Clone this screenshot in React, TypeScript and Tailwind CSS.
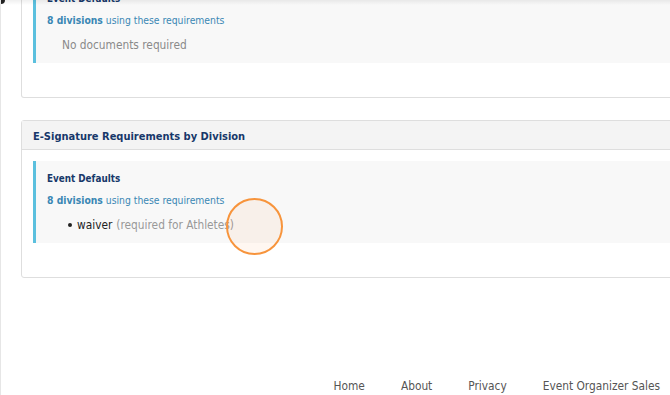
import React from 'react';

type Group = {
  title: string;
  count: number;
  items: { name: string; note: string }[];
  empty?: string;
};

function RequirementBlock({ group }: { group: Group }) {
  return (
    <div className="border-l-[3px] border-[#5bc0de] bg-[#f8f8f8] pl-[11px] pt-[11px] pb-[11px]">
      <div className="text-[9.8px] font-bold leading-[14px] text-[#17386a]">{group.title}</div>
      <div className="mt-[7px] text-[10.3px] leading-[14px] text-[#3a87b4]">
        <span className="font-bold">{group.count} divisions</span> using these requirements
      </div>
      {group.empty && (
        <div className="mt-[11px] pl-[15px] text-[11.8px] leading-[14px] text-[#8a8a8a]">{group.empty}</div>
      )}
      {group.items.length > 0 && (
        <ul className="mt-[11px] pl-[21px]">
          {group.items.map((it) => (
            <li key={it.name} className="flex items-center text-[11.8px] leading-[14px]">
              <span className="mr-[5px] inline-block h-[4px] w-[4px] rounded-full bg-[#222]" />
              <span className="text-[#222]">{it.name}</span>
              <span className="ml-[4px] text-[#999]">(required for {it.note})</span>
            </li>
          ))}
        </ul>
      )}
    </div>
  );
}

function Card({ title, group }: { title?: string; group: Group }) {
  return (
    <div className="ml-[20px] w-[680px] rounded-[3px] border border-[#dedede] bg-white">
      {title && (
        <div className="flex h-[29px] items-center border-b border-[#dedede] bg-[#f4f4f4] px-[11px] pt-[4px] text-[11px] font-bold text-[#17386a]">
          {title}
        </div>
      )}
      <div className="px-[11px] pt-[11px] pb-[34px]">
        <RequirementBlock group={group} />
      </div>
    </div>
  );
}

export default function App() {
  const docs: Group = { title: 'Event Defaults', count: 8, items: [], empty: 'No documents required' };
  const sigs: Group = {
    title: 'Event Defaults',
    count: 8,
    items: [{ name: 'waiver', note: 'Athletes' }],
  };

  return (
    <div
      className="relative h-[395px] w-[670px] overflow-hidden border-l border-[#e6e6e6] bg-white"
      style={{ fontFamily: '"DejaVu Sans Condensed", "DejaVu Sans", Verdana, sans-serif' }}
    >
      {/* page scrolled: first card cut off at top */}
      <div className="-mt-[19px]">
        <div className="ml-[20px] w-[680px] rounded-b-[3px] border border-t-0 border-[#dedede] bg-white px-[11px] pb-[34px]">
          <RequirementBlock group={docs} />
        </div>
        <div className="h-[22px]" />
        <Card title="E-Signature Requirements by Division" group={sigs} />
        <footer className="mt-[100px] flex justify-end gap-[36px] pr-[10px] text-[11.8px] text-[#555]">
          <span>Home</span>
          <span>About</span>
          <span>Privacy</span>
          <span>Event Organizer Sales</span>
        </footer>
      </div>

      {/* top shadow */}
      <div className="pointer-events-none absolute inset-x-0 top-0 h-[5px] bg-gradient-to-b from-[#00000010] to-transparent" />
      <div className="absolute left-0 top-0 h-[4px] w-[4px] rounded-br-full bg-[#222]" />

      {/* click highlight */}
      <div className="pointer-events-none absolute left-[225px] top-[198px] h-[57px] w-[57px] rounded-full border-2 border-[#f7943c] bg-[#ff9a4a14]" />
    </div>
  );
}
